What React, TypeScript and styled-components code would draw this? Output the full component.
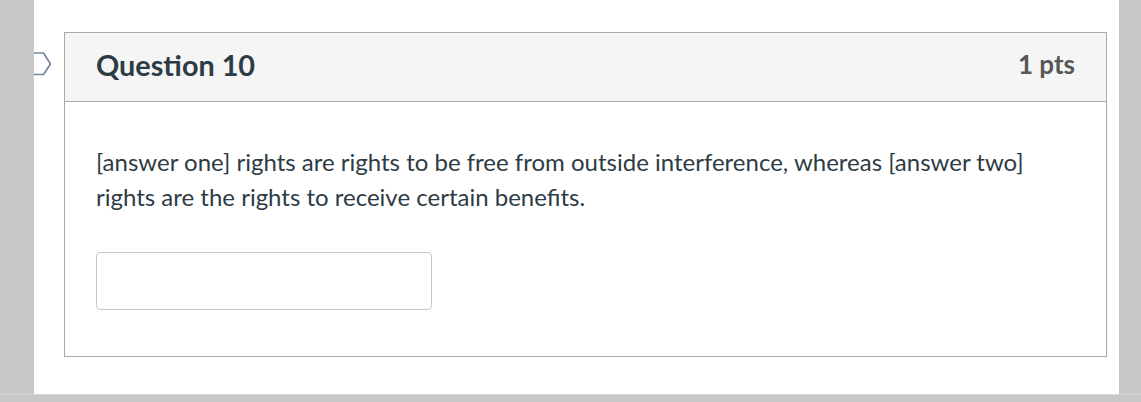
import React from 'react';
import { createGlobalStyle, styled } from 'styled-components';

const GlobalStyle = createGlobalStyle`
  html, body {
    margin: 0;
    padding: 0;
    background: #c8c8c8;
  }
`;

const App = () => {
  return (
    <>
      <GlobalStyle />
      <Page>
        <Gutter />
        <Sheet>
          <FlagMark width="24" height="26" viewBox="0 0 24 26">
            <path d="M0 2 H10.5 L17.5 13 L10.5 23.5 H0" fill="none" stroke="#7088a3" strokeWidth="1.7" strokeLinejoin="round" />
          </FlagMark>
          <QuestionBox>
            <Header>
              <Title>Question 10</Title>
              <Points>1 pts</Points>
            </Header>
            <Body>
              <Prompt>
                [answer one] rights are rights to be free from outside interference, whereas [answer two]
                rights are the rights to receive certain benefits.
              </Prompt>
              <AnswerInput type="text" aria-label="answer" />
            </Body>
          </QuestionBox>
        </Sheet>
      </Page>
    </>
  );
};

export default App;

const Page = styled.div`
  display: flex;
  width: 1141px;
  height: 394px;
  border-bottom: 1px solid #d6d6d6;
`;

const Gutter = styled.div`
  width: 34px;
  flex-shrink: 0;
`;

const Sheet = styled.div`
  position: relative;
  width: 1085px;
  background: #fff;
  padding: 32px 12px 0 30px;
  box-sizing: border-box;
  overflow: hidden;
`;

const FlagMark = styled.svg`
  position: absolute;
  left: -1px;
  top: 51px;
`;

const QuestionBox = styled.div`
  border: 1px solid #aaaaaa;
  height: 325px;
  box-sizing: border-box;
  font-family: Lato, 'Liberation Sans', sans-serif;
  color: #2d3b45;
`;

const Header = styled.div`
  display: flex;
  align-items: center;
  justify-content: space-between;
  height: 64px;
  padding: 0 31px 4px 31px;
  background: #f5f5f5;
  border-bottom: 1px solid #aaaaaa;
`;

const Title = styled.h2`
  margin: 0;
  font-size: 28.8px;
  font-weight: 700;
  line-height: 1.2;
  color: #2d3b45;
`;

const Points = styled.div`
  font-size: 26px;
  font-weight: 700;
  line-height: 1.2;
  color: #575757;
`;

const Body = styled.div`
  padding: 42px 31px 0 31px;
`;

const Prompt = styled.div`
  font-size: 24px;
  line-height: 35px;
  max-width: 960px;
`;

const AnswerInput = styled.input`
  display: block;
  margin-top: 38px;
  width: 336px;
  height: 58px;
  box-sizing: border-box;
  border: 1px solid #c8c8c8;
  border-radius: 4px;
  background: #fff;
  outline: none;
`;
